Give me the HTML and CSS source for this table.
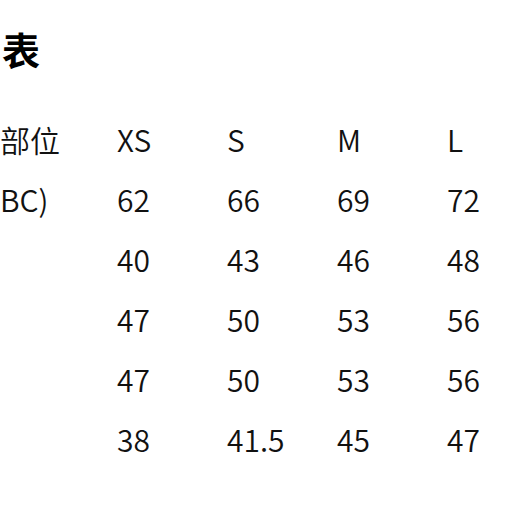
FILE: index.html
```html
<!DOCTYPE html>
<html lang="zh">
<head>
<meta charset="utf-8">
<link rel="stylesheet" href="styles.css">
</head>
<body>
<div class="page">
  <h1 class="title">表</h1>
  <div class="chart">
    <div class="cell label">部位</div>
    <div class="cell">XS</div>
    <div class="cell">S</div>
    <div class="cell">M</div>
    <div class="cell">L</div>

    <div class="cell label">BC)</div>
    <div class="cell">62</div>
    <div class="cell">66</div>
    <div class="cell">69</div>
    <div class="cell">72</div>

    <div class="cell label"></div>
    <div class="cell">40</div>
    <div class="cell">43</div>
    <div class="cell">46</div>
    <div class="cell">48</div>

    <div class="cell label"></div>
    <div class="cell">47</div>
    <div class="cell">50</div>
    <div class="cell">53</div>
    <div class="cell">56</div>

    <div class="cell label"></div>
    <div class="cell">47</div>
    <div class="cell">50</div>
    <div class="cell">53</div>
    <div class="cell">56</div>

    <div class="cell label"></div>
    <div class="cell">38</div>
    <div class="cell">41.5</div>
    <div class="cell">45</div>
    <div class="cell">47</div>
  </div>
</div>
</body>
</html>
```

FILE: styles.css
```css
html, body {
  margin: 0;
  padding: 0;
  background: #ffffff;
}
body {
  width: 508px;
  height: 508px;
  overflow: hidden;
  font-family: "Noto Sans CJK SC", "Noto Sans", sans-serif;
  color: #111111;
}
.page {
  padding-top: 30px;
}
.title {
  margin: 0;
  padding-left: 2px;
  font-size: 38px;
  line-height: 38px;
  font-weight: 700;
  color: #000000;
}
.chart {
  margin-top: 41px;
  display: grid;
  grid-template-columns: 117px repeat(3, 110px) 1fr;
}
.cell {
  font-size: 30px;
  line-height: 60px;
  font-weight: 350;
  white-space: nowrap;
}
.label {
  margin-left: 0;
}
```
